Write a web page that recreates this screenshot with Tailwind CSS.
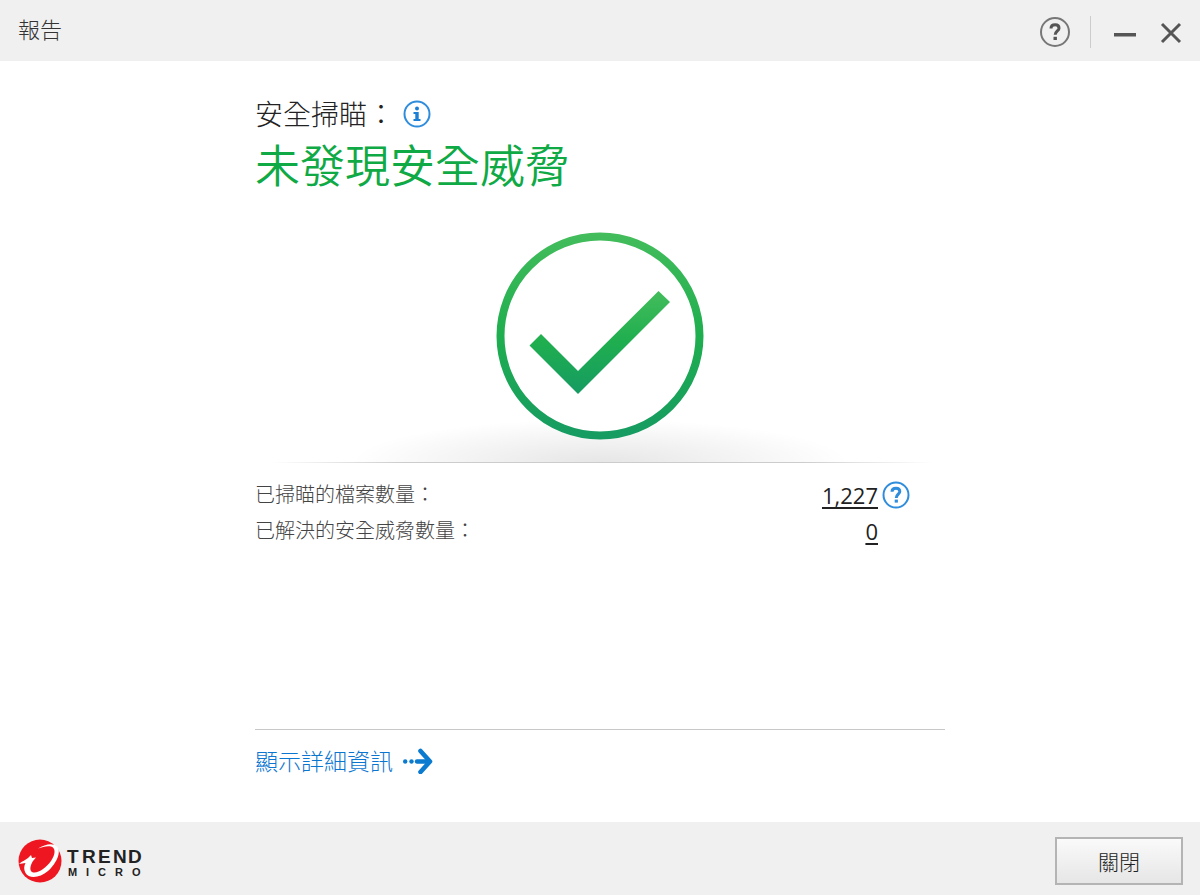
<!DOCTYPE html>
<html lang="zh-Hant">
<head>
    <meta charset="UTF-8">
    <title>報告</title>
    <meta name="viewport" content="width=device-width, initial-scale=1.0">
    <script src="https://cdn.jsdelivr.net/npm/@tailwindcss/browser@4"></script>
</head>
<body class="flex min-h-screen flex-col bg-white font-['Open_Sans','Noto_Sans_CJK_TC',sans-serif] font-light">
    <header class="flex h-[61px] items-center justify-between bg-[#f0f0f0] pr-[18px] pl-[18px]">
        <h1 class="pb-1 text-[22px] leading-7 text-[#333]">報告</h1>
        <div class="flex items-center pt-[3px]">
            <button type="button" aria-label="說明" class="mr-[19px]">
                <svg class="block" width="32" height="32" viewBox="0 0 32 32" fill="none">
                    <circle cx="16" cy="16" r="14" stroke="#777" stroke-width="2"/>
                    <path d="M12 12.6C12 9.800 13.800 8.800 16.200 8.800C18.700 8.800 20 10.400 20 12.200C20 14.800 16.200 15.200 16.200 18.800" stroke="#555" stroke-width="3"/>
                    <rect x="14.500" y="20.800" width="3.400" height="3.200" fill="#555"/>
                </svg>
            </button>
            <span class="h-8 w-px bg-[#ccc]"></span>
            <button type="button" aria-label="最小化" class="ml-[23px]">
                <svg class="block" width="22" height="28" viewBox="0 0 22 28">
                    <rect x="0" y="15" width="22" height="3.500" fill="#555"/>
                </svg>
            </button>
            <button type="button" aria-label="關閉視窗" class="ml-6">
                <svg class="block" width="22" height="28" viewBox="0 0 22 28">
                    <path d="M2 6L20 24M20 6L2 24" stroke="#555" stroke-width="3"/>
                </svg>
            </button>
        </div>
    </header>

    <main class="mx-auto flex w-full max-w-[690px] flex-1 flex-col">
        <div class="flex items-center pt-8 text-[28px] leading-[42px] text-[#222]">
            <span>安全掃瞄：</span>
            <button type="button" aria-label="掃瞄資訊" class="ml-2">
                <svg class="block" width="28" height="28" viewBox="0 0 28 28" fill="none">
                    <circle cx="14" cy="14" r="12.500" stroke="#2f8ddc" stroke-width="2"/>
                    <circle cx="14" cy="8.500" r="2" fill="#1c7fd6"/>
                    <path d="M10.500 12H15.700V19H17.500V21H10.500V19H12.300V14H10.500Z" fill="#1c7fd6"/>
                </svg>
            </button>
        </div>
        <h2 class="pt-px text-[45px] leading-[60px] font-[350] text-[#0fa945]">未發現安全威脅</h2>

        <!-- status mark standing on its shadow -->
        <div class="mt-9 flex justify-center">
            <svg class="block" width="690" height="232" viewBox="0 0 690 232" fill="none">
                <defs>
                    <linearGradient id="ring" gradientUnits="userSpaceOnUse" x1="0" y1="0" x2="0" y2="207">
                        <stop offset="0" stop-color="#44bd5c"/>
                        <stop offset="0.500" stop-color="#1fae4f"/>
                        <stop offset="1" stop-color="#169b62"/>
                    </linearGradient>
                    <linearGradient id="tick" gradientUnits="userSpaceOnUse" x1="0" y1="58" x2="0" y2="162">
                        <stop offset="0" stop-color="#44bd5c"/>
                        <stop offset="0.500" stop-color="#1fae4f"/>
                        <stop offset="1" stop-color="#169b62"/>
                    </linearGradient>
                    <linearGradient id="floor" gradientUnits="userSpaceOnUse" x1="16" y1="0" x2="678" y2="0">
                        <stop offset="0" stop-color="#ccc" stop-opacity="0"/>
                        <stop offset="0.200" stop-color="#ccc"/>
                        <stop offset="0.800" stop-color="#ccc"/>
                        <stop offset="1" stop-color="#ccc" stop-opacity="0"/>
                    </linearGradient>
                    <radialGradient id="shade" gradientUnits="userSpaceOnUse" cx="0" cy="0" r="1" gradientTransform="translate(345 231) scale(250 44)">
                        <stop offset="0" stop-color="#000" stop-opacity="0.100"/>
                        <stop offset="0.500" stop-color="#000" stop-opacity="0.050"/>
                        <stop offset="1" stop-color="#000" stop-opacity="0"/>
                    </radialGradient>
                </defs>
                <rect x="90" y="185" width="510" height="46" fill="url(#shade)"/>
                <rect x="16" y="230" width="662" height="1" fill="url(#floor)"/>
                <circle cx="345" cy="104" r="99.500" fill="#fff" stroke="url(#ring)" stroke-width="8"/>
                <path d="M274.500 113.500L286 102L323 139L403.500 59L415 70L323 162Z" fill="url(#tick)"/>
            </svg>
        </div>

        <dl class="pt-[13px] text-[#444]">
            <div class="flex h-9 items-center justify-between">
                <dt class="text-[20px]">已掃瞄的檔案數量：</dt>
                <dd class="flex items-center pr-[35px] text-[22px] font-normal text-[#222]">
                    <a href="#" class="underline underline-offset-3">1,227</a>
                    <button type="button" aria-label="檔案數量說明" class="ml-1">
                        <svg class="block" width="28" height="28" viewBox="0 0 28 28" fill="none">
                            <circle cx="14" cy="14" r="12.500" stroke="#2f8ddc" stroke-width="2"/>
                            <path d="M10 10.800C10 8.200 11.700 7.300 14 7.300C16.400 7.300 17.800 8.700 17.800 10.500C17.800 13 14.200 13.500 14.200 17" stroke="#2f8ddc" stroke-width="3"/>
                            <rect x="12.700" y="18.600" width="3.200" height="3" fill="#2f8ddc"/>
                        </svg>
                    </button>
                </dd>
            </div>
            <div class="flex h-9 items-center justify-between">
                <dt class="text-[20px]">已解決的安全威脅數量：</dt>
                <dd class="pr-[67px] text-[22px] font-normal text-[#222]">
                    <a href="#" class="underline underline-offset-3">0</a>
                </dd>
            </div>
        </dl>

        <div class="mt-auto border-t border-[#c8c8c8] pt-[15px] pb-[45px]">
            <a href="#" class="flex items-center text-[23px] leading-8 text-[#0b76d0]">
                <span>顯示詳細資訊</span>
                <svg class="ml-2.5 block" width="30" height="26" viewBox="0 0 30 26" fill="none">
                    <circle cx="2.200" cy="13.500" r="2.200" fill="#0b7bd0"/>
                    <circle cx="8.500" cy="13.500" r="2.200" fill="#0b7bd0"/>
                    <path d="M14 13.500H25" stroke="#0b7bd0" stroke-width="4.400" stroke-linecap="round"/>
                    <path d="M17.500 3L27 13.500L17.500 24" stroke="#0b7bd0" stroke-width="4.600" stroke-linecap="round" stroke-linejoin="round"/>
                </svg>
            </a>
        </div>
    </main>

    <footer class="flex h-[73px] items-center justify-between bg-[#f0f0f0] pt-1 pr-[17px] pl-[18px]">
        <svg class="block" width="130" height="46" viewBox="0 0 130 46" role="img" aria-label="Trend Micro">
            <circle cx="22" cy="23" r="21.500" fill="#ee1620"/>
            <path d="M20 10.500C27 6 35 4.500 39 8.500C44 14 38 26 30 33C22 40 11 41 7.500 35C5.500 31 6 28 7.500 25L1 26C4 23 8 22 10 20L13 17L14 20L18 19.500L15 23C12 28 11.500 32 14 34C19 36.500 28 30 33 23C37.500 16.500 38 10 33 8.500C29 7.500 24.500 9 20 10.500Z" fill="#fff"/>
            <g class="font-['Liberation_Sans',sans-serif] font-bold" fill="#222">
                <text x="49 64 80 95 110" y="25" font-size="19">TREND</text>
                <text x="50 68 80 97 114" y="38" font-size="11">MICRO</text>
            </g>
        </svg>
        <button type="button" class="h-12 w-32 border-2 border-[#b4b4b4] bg-linear-to-b from-[#fafafa] to-[#e6e6e6] pt-1 text-[21px] text-[#222]">關閉</button>
    </footer>
</body>
</html>
